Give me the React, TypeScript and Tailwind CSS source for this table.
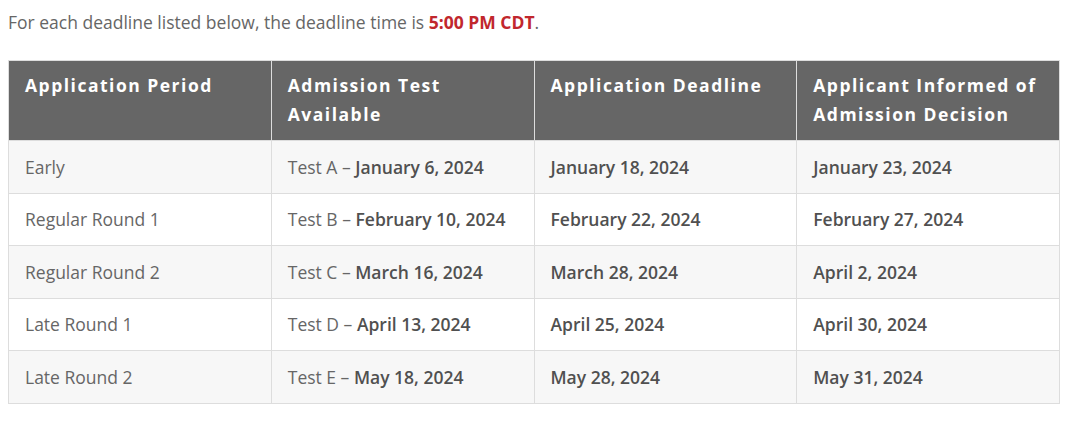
const rows = [
  { period: 'Early', test: 'Test A', testDate: 'January 6, 2024', deadline: 'January 18, 2024', informed: 'January 23, 2024' },
  { period: 'Regular Round 1', test: 'Test B', testDate: 'February 10, 2024', deadline: 'February 22, 2024', informed: 'February 27, 2024' },
  { period: 'Regular Round 2', test: 'Test C', testDate: 'March 16, 2024', deadline: 'March 28, 2024', informed: 'April 2, 2024' },
  { period: 'Late Round 1', test: 'Test D', testDate: 'April 13, 2024', deadline: 'April 25, 2024', informed: 'April 30, 2024' },
  { period: 'Late Round 2', test: 'Test E', testDate: 'May 18, 2024', deadline: 'May 28, 2024', informed: 'May 31, 2024' },
];

const headers = ['Application Period', 'Admission Test Available', 'Application Deadline', 'Applicant Informed of Admission Decision'];

export default function App() {
  return (
    <div className="bg-white px-2 pt-[8px] font-['Open_Sans',sans-serif] text-[#666]">
      <p className="text-[17.5px] leading-[28px]">
        For each deadline listed below, the deadline time is{' '}
        <strong className="font-bold text-[#c1272d]">5:00 PM CDT</strong>.
      </p>
      <table className="mt-[24px] w-[1052px] table-fixed border-collapse border border-[#ddd]">
        <thead>
          <tr className="bg-[#666]">
            {headers.map((h) => (
              <th
                key={h}
                className="h-[79px] border-x border-[#ddd] px-4 pt-[10px] pb-[11px] text-left align-top text-[17.5px] font-bold leading-[29px] tracking-[1.5px] text-white"
              >
                {h}
              </th>
            ))}
          </tr>
        </thead>
        <tbody>
          {rows.map((r, i) => (
            <tr key={r.period} className={i % 2 === 0 ? 'bg-[#f7f7f7]' : 'bg-white'}>
              <td className="h-[52.5px] border border-[#ddd] px-4 text-[17.5px] leading-[24px]">{r.period}</td>
              <td className="border border-[#ddd] px-4 text-[17.5px] leading-[24px]">
                {r.test} – <span className="font-semibold text-[#505050]">{r.testDate}</span>
              </td>
              <td className="border border-[#ddd] px-4 text-[17.5px] font-semibold leading-[24px] text-[#505050]">{r.deadline}</td>
              <td className="border border-[#ddd] px-4 text-[17.5px] font-semibold leading-[24px] text-[#505050]">{r.informed}</td>
            </tr>
          ))}
        </tbody>
      </table>
    </div>
  );
}
